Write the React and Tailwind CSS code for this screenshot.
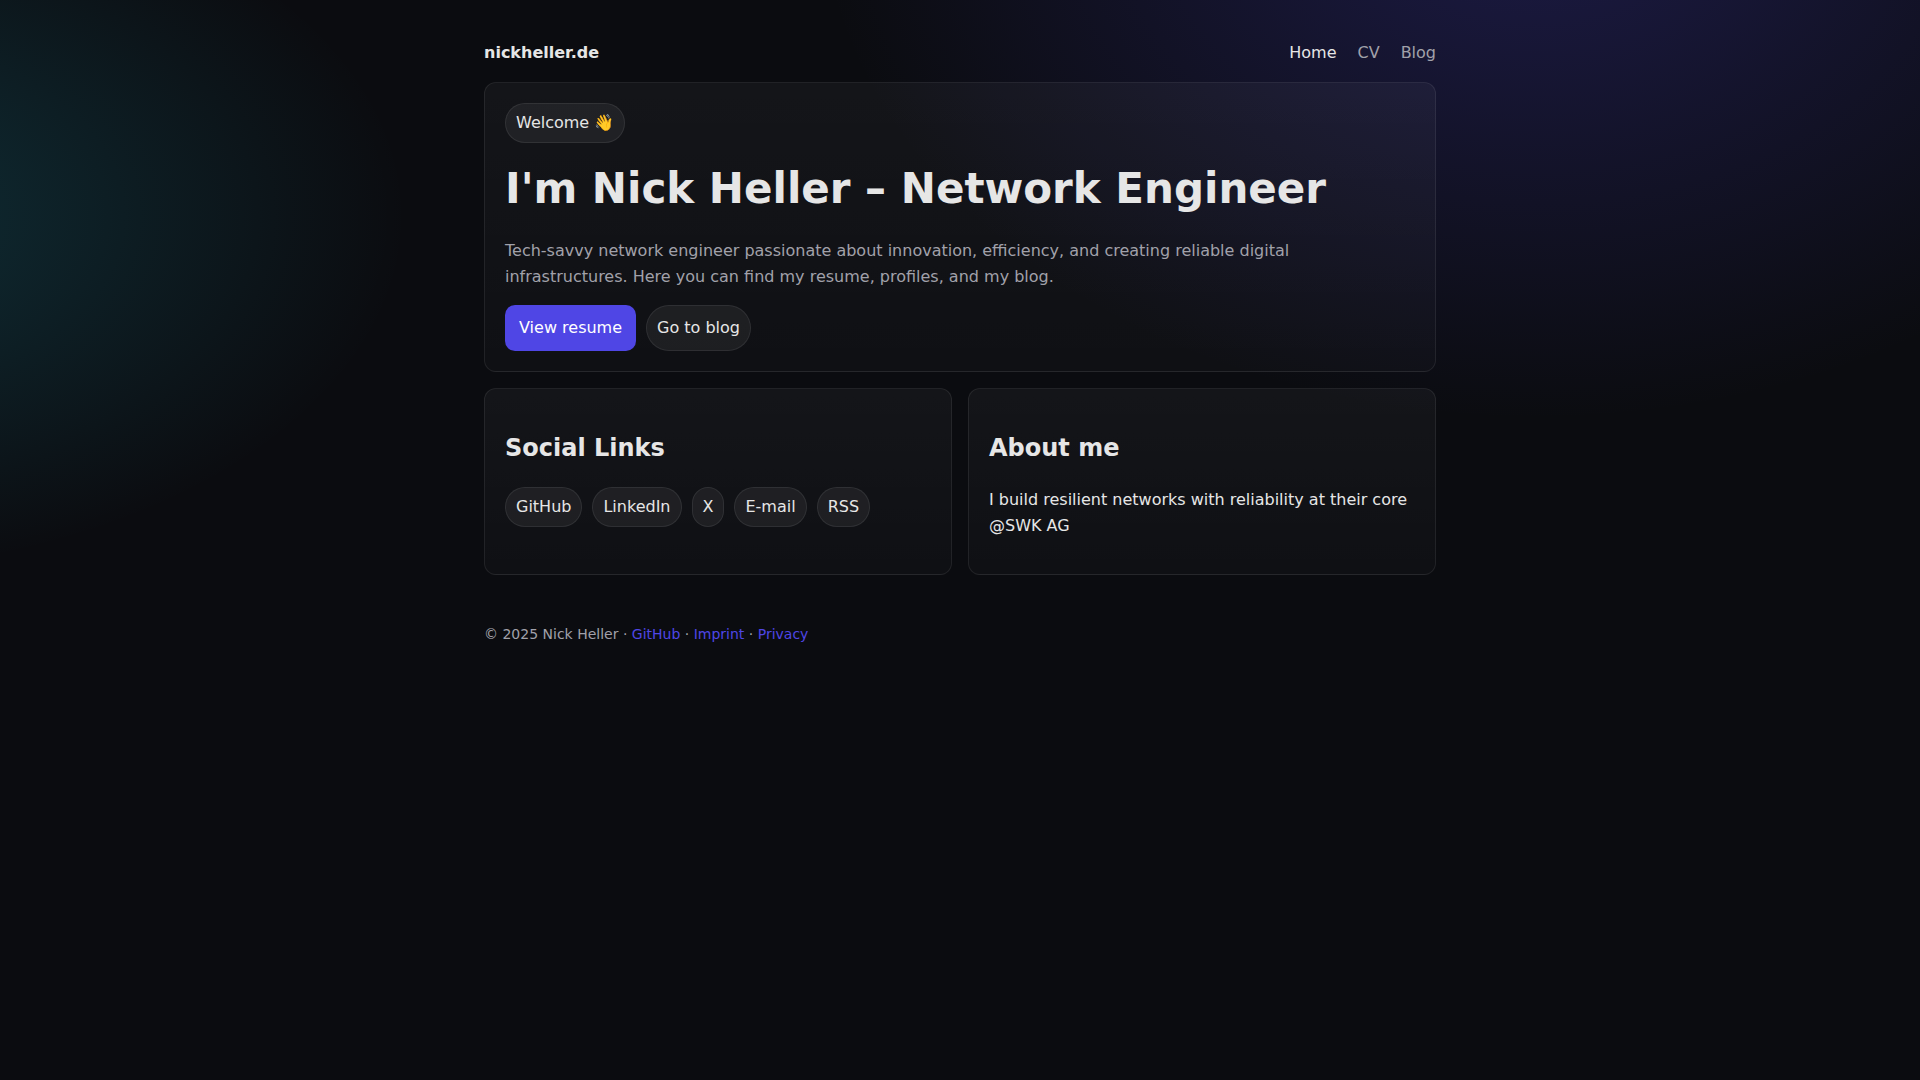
const navLinks = [
  { label: 'Home', href: '#home', active: true },
  { label: 'CV', href: '#cv' },
  { label: 'Blog', href: '#blog' },
];

const socialLinks = ['GitHub', 'LinkedIn', 'X', 'E-mail', 'RSS'];
const footerLinks = ['GitHub', 'Imprint', 'Privacy'];

const pill =
  'inline-flex items-center rounded-full border border-white/8 bg-white/6 px-2.5 py-1.5';

function Card({ className = '', children }) {
  return (
    <section
      className={`rounded-xl border border-white/8 bg-linear-to-b from-white/4 to-white/2 px-5 ${className}`}
    >
      {children}
    </section>
  );
}

export default function App() {
  return (
    <div className="min-h-screen bg-[#0b0c10] bg-[radial-gradient(1200px_880px_at_80%_-10%,rgba(79,70,229,0.25),transparent_60%),radial-gradient(1000px_600px_at_-10%_20%,rgba(34,211,238,0.18),transparent_60%)] font-['DejaVu_Sans',sans-serif] text-base leading-[26px] text-[#e6e6e6]">
      <div className="mx-auto max-w-[1000px] px-6 pt-6">
        <header className="flex items-center justify-between py-4">
          <a href="#home" className="font-bold">
            nickheller.de
          </a>
          <nav className="flex gap-[21px]">
            {navLinks.map((link) => (
              <a
                key={link.label}
                href={link.href}
                className={link.active ? '' : 'text-[#a1a1aa]'}
              >
                {link.label}
              </a>
            ))}
          </nav>
        </header>

        <main className="grid gap-4">
          <Card className="py-5">
            <span className={pill}>Welcome 👋</span>
            <h1 className="mt-5 text-[42px] leading-[52px] font-bold">
              I'm Nick Heller – Network Engineer
            </h1>
            <p className="mt-[23px] max-w-[820px] text-[#a1a1aa]">
              Tech-savvy network engineer passionate about innovation, efficiency, and creating
              reliable digital infrastructures. Here you can find my resume, profiles, and my blog.
            </p>
            <div className="mt-[15px] flex gap-2.5">
              <a href="#cv" className="rounded-[10px] bg-[#4f46e5] px-3.5 py-2.5 text-white">
                View resume
              </a>
              <a href="#blog" className={pill}>
                Go to blog
              </a>
            </div>
          </Card>

          <div className="grid grid-cols-1 gap-4 md:grid-cols-2">
            <Card className="py-10">
              <h2 className="text-2xl leading-[38px] font-bold">Social Links</h2>
              <div className="mt-5 flex flex-wrap gap-2.5">
                {socialLinks.map((name) => (
                  <a key={name} href={`#${name.toLowerCase()}`} className={pill}>
                    {name}
                  </a>
                ))}
              </div>
            </Card>
            <Card className="pt-10 pb-[35px]">
              <h2 className="text-2xl leading-[38px] font-bold">About me</h2>
              <p className="mt-5">
                I build resilient networks with reliability at their core @SWK AG
              </p>
            </Card>
          </div>
        </main>

        <footer className="mt-12 text-sm leading-[22px] text-[#a1a1aa]">
          © 2025 Nick Heller
          {footerLinks.map((name) => (
            <span key={name}>
              {' · '}
              <a href={`#${name.toLowerCase()}`} className="text-[#4f46e5]">
                {name}
              </a>
            </span>
          ))}
        </footer>
      </div>
    </div>
  );
}
